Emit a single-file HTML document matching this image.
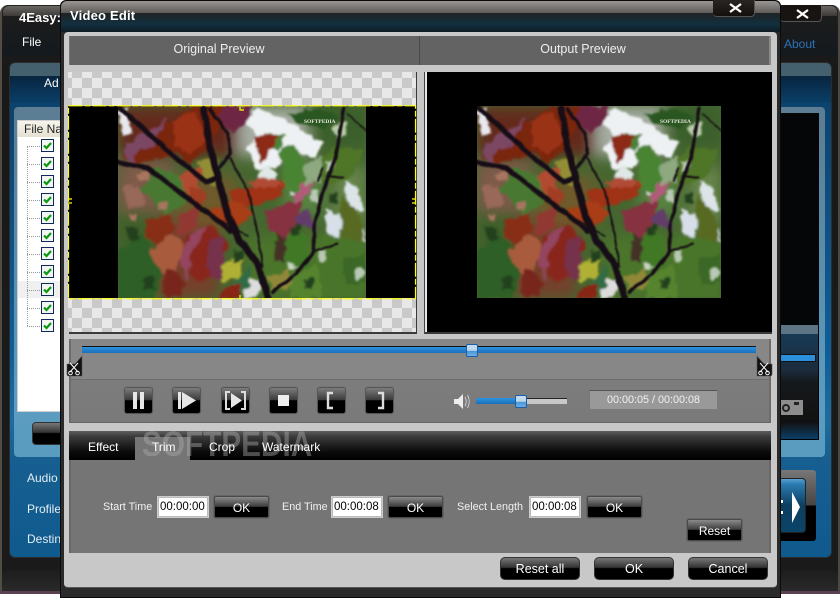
<!DOCTYPE html>
<html><head><meta charset="utf-8"><style>
html,body{margin:0;padding:0;background:#fff}
#r{position:relative;width:840px;height:598px;overflow:hidden;font-family:"Liberation Sans",sans-serif;font-size:12px;color:#fff}
#r div{position:absolute;box-sizing:border-box}
.t{white-space:nowrap;line-height:14px}
.b{background:linear-gradient(#8a8a8a 0,#3c3c3c 48%,#000 50%,#000 100%);border:1px solid #4a4a4a;border-radius:2px;text-align:center;color:#fff;font-size:12px;line-height:22px;box-shadow:0 0 0 1px #666}
.p{background:linear-gradient(#7c7c7c 0,#3a3a3a 48%,#000 50%,#000 100%);border:1px solid #555;border-radius:3px;width:29px;height:27px;top:387px;box-shadow:0 0 0 1px #777}
.p svg{position:absolute;left:0;top:0}
.bb{background:linear-gradient(#777 0,#333 45%,#000 50%,#000 100%);border:1px solid #333;border-radius:5px;height:23px;top:557px;width:80px;text-align:center;line-height:22px;font-size:12.5px}
.in{background:#fff;border:1px solid #ccc;outline:1px solid #bbb;outline-offset:-2px;color:#000;width:52px;height:22px;top:496px;font-size:11.5px;line-height:20px;padding-left:2px}
.lb{top:500px;color:#f0f0f0;font-size:10.8px}
.ck{left:41px;width:13px;height:13px;border:1px solid #0c2a5c;background:#f4f4f0}
.dot{left:27px;width:13px;height:0;border-top:1px dotted #999}
.chk{background-color:#c9c9c9;background-image:conic-gradient(#e8e8e8 25%,#c9c9c9 0 50%,#e8e8e8 0 75%,#c9c9c9 0);background-size:20px 20px}
</style></head><body><div id="r">

<!-- main window behind -->
<div style="left:0;top:0;width:840px;height:598px;background:#fff"></div>
<div style="left:0;top:5px;width:840px;height:588px;border-radius:8px 8px 0 0;background:linear-gradient(#222 0,#191919 60px,#1a1a1a 100%);border-left:2px solid #514c44;border-right:2px solid #4c4843"></div>
<div style="left:3px;top:6px;width:834px;height:10px;background:linear-gradient(#6b6864,#3c3a38);border-radius:6px 6px 0 0"></div>
<div style="left:3px;top:16px;width:834px;height:40px;background:linear-gradient(#1c1c1c,#141a1e)"></div>
<div style="left:2px;top:570px;width:836px;height:23px;background:linear-gradient(#1d1d1d,#2a2a2a)"></div>
<div style="left:0;top:591px;width:60px;height:3px;background:#5a3f50"></div>
<div style="left:780px;top:591px;width:60px;height:3px;background:#5a3f50"></div>
<div class="t" style="left:19px;top:11px;font-weight:bold;font-size:13px">4Easy:</div>
<div class="t" style="left:22px;top:35px;font-size:12px">File</div>
<div class="t" style="left:784px;top:37px;color:#2d73b8;font-size:12px">About</div>
<div style="left:780px;top:5px;width:42px;height:17px;background:#181412;border-radius:0 0 4px 4px;border-bottom:1px solid #555;border-right:1px solid #555"></div>
<svg style="position:absolute;left:795px;top:8px" width="16" height="12"><path d="M2 2L13 10M13 2L2 10" stroke="#fff" stroke-width="2.2" fill="none"/></svg>

<!-- main blue panel -->
<div style="left:9px;top:62px;width:823px;height:496px;border-radius:6px;border:1px solid #2c2c2c;background:linear-gradient(#0c3f68 0,#0f5f9b 60%,#1e6c9e 72%,#175f91 80%,#0f5a8e 100%)"></div>
<div style="left:10px;top:63px;width:821px;height:13px;background:#44606f;border-radius:5px 5px 0 0"></div>
<div style="left:10px;top:76px;width:821px;height:27px;background:linear-gradient(#08253f,#0a3f68)"></div>
<div class="t" style="left:44px;top:76px;font-size:12px">Ad</div>
<div style="left:14px;top:107px;width:811px;height:350px;border-radius:4px;background:linear-gradient(#5c7d93,#5b9cc0 85%,#5a9cc0)"></div>
<div style="left:17px;top:120px;width:45px;height:292px;background:#fff;border:1px solid #d0d0d0"></div>
<div style="left:18px;top:121px;width:44px;height:16px;background:linear-gradient(#f6f4ec,#e4e0d2)"></div>
<div class="t" style="left:24px;top:122px;color:#222;font-size:12px">File Name</div>
<div style="left:18px;top:281px;width:42px;height:17px;background:#f0f0f0"></div>
<div style="left:27px;top:146px;width:0;height:180px;border-left:1px dotted #999"></div>

<div class="dot" style="top:146px"></div><div class="ck" style="top:139px"></div>
<div class="dot" style="top:164px"></div><div class="ck" style="top:157px"></div>
<div class="dot" style="top:182px"></div><div class="ck" style="top:175px"></div>
<div class="dot" style="top:200px"></div><div class="ck" style="top:193px"></div>
<div class="dot" style="top:218px"></div><div class="ck" style="top:211px"></div>
<div class="dot" style="top:236px"></div><div class="ck" style="top:229px"></div>
<div class="dot" style="top:254px"></div><div class="ck" style="top:247px"></div>
<div class="dot" style="top:272px"></div><div class="ck" style="top:265px"></div>
<div class="dot" style="top:290px"></div><div class="ck" style="top:283px"></div>
<div class="dot" style="top:308px"></div><div class="ck" style="top:301px"></div>
<div class="dot" style="top:326px"></div><div class="ck" style="top:319px"></div>
<svg style="position:absolute;left:41px;top:139px" width="13" height="200" fill="none" stroke="#0a9a12" stroke-width="2.2">
<path d="M3 6.5L5.5 9L10 4"/><path d="M3 24.5L5.5 27L10 22"/><path d="M3 42.5L5.5 45L10 40"/><path d="M3 60.5L5.5 63L10 58"/><path d="M3 78.5L5.5 81L10 76"/><path d="M3 96.5L5.5 99L10 94"/><path d="M3 114.5L5.5 117L10 112"/><path d="M3 132.5L5.5 135L10 130"/><path d="M3 150.5L5.5 153L10 148"/><path d="M3 168.5L5.5 171L10 166"/><path d="M3 186.5L5.5 189L10 184"/></svg>

<div style="left:32px;top:422px;width:40px;height:23px;border-radius:4px;background:linear-gradient(#777,#333 45%,#000 50%);border:1px solid #333"></div>
<div class="t" style="left:27px;top:471px;font-size:12px;color:#e4eef4">Audio</div>
<div class="t" style="left:27px;top:502px;font-size:12px;color:#e4eef4">Profile</div>
<div class="t" style="left:27px;top:532px;font-size:12px;color:#e4eef4">Destin</div>

<!-- right bits of main -->
<div style="left:780px;top:113px;width:39px;height:212px;background:#040608"></div>
<div style="left:780px;top:325px;width:39px;height:115px;background:linear-gradient(#5c7484 0,#5c7484 9px,#183a56 9px,#1b2c3c 45px,#15191c 50%,#111 85%,#0c3f66 100%);border-right:1px solid #000;border-bottom:1px solid #000"></div>
<div style="left:780px;top:354px;width:36px;height:8px;background:#2b8fdb;border:1px solid #111;border-width:1px 1px 1px 0"></div>
<div style="left:780px;top:400px;width:23px;height:15px;background:#8d8d8d"></div>
<div style="left:782px;top:404px;width:8px;height:8px;border:2px solid #222;border-radius:50%"></div>
<div style="left:794px;top:402px;width:5px;height:3px;background:#222"></div>
<div style="left:780px;top:470px;width:36px;height:71px;background:linear-gradient(#777,#444 50%,#000 50%);border-radius:0 3px 3px 0"></div>
<div style="left:780px;top:478px;width:26px;height:55px;background:linear-gradient(#5aa0d0 0,#2a7ab0 10%,#0c3e60 50%,#0a4468 100%);border-radius:0 4px 4px 0;border:1px solid #222;border-left:0"></div>
<svg style="position:absolute;left:780px;top:490px" width="24" height="34"><path d="M12 2L20 17L12 33Z" fill="#fff"/><rect x="1" y="10" width="2" height="3" fill="#fff"/><rect x="1" y="21" width="2" height="3" fill="#fff"/></svg>

<!-- dialog -->
<div style="left:60px;top:0;width:721px;height:598px;background:#2a2a2a;border:1px solid #0a0a0a;border-radius:6px 6px 0 0"></div>
<div style="left:61px;top:1px;width:719px;height:12px;background:linear-gradient(#9a9793,#5d5b58);border-radius:6px 6px 0 0"></div>
<div style="left:61px;top:13px;width:719px;height:19px;background:linear-gradient(#1f2224,#12303f 60%,#0f1c24)"></div>
<div class="t" style="left:70px;top:9px;font-weight:bold;font-size:13px;letter-spacing:.2px">Video Edit</div>
<div style="left:713px;top:0;width:42px;height:17px;background:linear-gradient(#2a2522,#14100e);border-radius:0 0 4px 4px;border-bottom:1px solid #555;border-right:1px solid #555"></div>
<svg style="position:absolute;left:728px;top:2px" width="16" height="12"><path d="M2 2L13 10M13 2L2 10" stroke="#fff" stroke-width="2.2" fill="none"/></svg>

<div style="left:64px;top:32px;width:713px;height:556px;background:#c8c8c8;border-radius:4px;border-bottom:1px solid #555"></div>
<div style="left:69px;top:36px;width:702px;height:29px;background:#636363;border-left:1px solid #777;border-right:2px solid #8a8a8a"></div>
<div style="left:419px;top:36px;width:1px;height:29px;background:#4a4a4a"></div>
<div class="t" style="left:69px;top:42px;width:300px;text-align:center;font-size:12.5px;color:#eee">Original Preview</div>
<div class="t" style="left:420px;top:42px;width:326px;text-align:center;font-size:12.5px;color:#eee">Output Preview</div>

<!-- checker -->
<div class="chk" style="left:68px;top:72px;width:348px;height:34px;background-position:4px 16px"></div>
<div class="chk" style="left:68px;top:298px;width:348px;height:34px;background-position:4px 0"></div>
<div style="left:69px;top:332px;width:348px;height:2px;background:#3a3a3a"></div>
<div style="left:416px;top:72px;width:1px;height:262px;background:#3a3a3a"></div>
<div style="left:68px;top:106px;width:348px;height:192px;background:#000"></div>
<div style="left:424px;top:72px;width:3px;height:262px;background:#e8e8e8;border-left:1px solid #444"></div>
<div style="left:427px;top:72px;width:345px;height:260px;background:#000"></div>
<div style="left:425px;top:332px;width:347px;height:2px;background:#3a3a3a"></div>

<svg width="0" height="0" style="position:absolute"><defs>
<filter id="org" x="-5%" y="-5%" width="110%" height="110%"><feTurbulence type="fractalNoise" baseFrequency="0.11" numOctaves="3" seed="4" result="n"/><feDisplacementMap in="SourceGraphic" in2="n" scale="9" xChannelSelector="R" yChannelSelector="G"/><feGaussianBlur stdDeviation="1"/></filter>
<filter id="brn" x="-5%" y="-5%" width="110%" height="110%"><feTurbulence type="fractalNoise" baseFrequency="0.08" numOctaves="2" seed="7" result="n"/><feDisplacementMap in="SourceGraphic" in2="n" scale="3" xChannelSelector="R" yChannelSelector="G"/><feGaussianBlur stdDeviation="0.7"/></filter>
<filter id="bb" x="-10%" y="-10%" width="120%" height="120%"><feGaussianBlur stdDeviation="7"/></filter>
<clipPath id="cp"><rect width="248" height="192"/></clipPath>
<g id="photo" clip-path="url(#cp)">
<rect width="248" height="192" fill="#466630"/>
<g filter="url(#bb)">
<rect x="0" y="55" width="55" height="50" fill="#7e5a48"/>
<rect x="0" y="105" width="40" height="87" fill="#3f5f2a"/>
<rect x="40" y="110" width="60" height="82" fill="#74412c"/>
<rect x="60" y="70" width="60" height="50" fill="#6e5a2a"/>
<rect x="120" y="0" width="70" height="50" fill="#a4aca0"/>
<rect x="165" y="60" width="40" height="50" fill="#56823f"/>
<rect x="200" y="0" width="48" height="40" fill="#3a5e2c"/>
<rect x="130" y="130" width="118" height="62" fill="#4c742a"/>
<rect x="215" y="60" width="33" height="60" fill="#66844c"/>
<rect x="0" y="0" width="120" height="50" fill="#642a1c"/>
</g>
<g filter="url(#org)">
<!-- sky -->
<path d="M126 14L140 4L158 10L178 20L206 38L196 52L172 44L158 62L138 62L130 44L138 28Z" fill="#eef1f3"/>
<path d="M145 60L160 66L152 80L138 76Z" fill="#dfe8e6"/>
<path d="M176 72L186 78L182 92L172 88Z" fill="#dfe6e8"/>
<path d="M225 75L240 82L246 104L232 104Z" fill="#dce4e8"/>
<path d="M208 104L222 110L222 132L208 126Z" fill="#d8dfe8"/>
<path d="M238 120L248 126L246 146L238 138Z" fill="#d6dee6"/>
<path d="M0 6L8 2L14 26L4 32Z" fill="#e8e8ee"/>
<path d="M124 176L144 172L142 190L126 192Z" fill="#dcdcdc"/>
<path d="M168 152L180 148L182 160L170 165Z" fill="#c8d6c0"/>
<path d="M215 20L228 16L230 30L218 34Z" fill="#b8cca8"/>
<!-- greens -->
<path d="M162 42L176 38L190 62L182 96L166 78Z" fill="#4a8431"/>
<path d="M190 62L218 40L246 44L234 72L206 80Z" fill="#507428"/>
<path d="M222 88L244 112L247 150L224 132Z" fill="#586a20"/>
<path d="M170 8L200 2L222 12L205 22L180 18Z" fill="#2a5624"/>
<path d="M152 112L186 128L192 165L160 152Z" fill="#417828"/>
<path d="M205 128L248 136L245 190L200 190Z" fill="#487429"/>
<path d="M0 145L26 128L44 160L36 192L0 192Z" fill="#2f5e25"/>
<path d="M34 60L62 70L70 96L48 110L24 84Z" fill="#4a7830"/>
<path d="M150 28L168 30L160 44L150 40Z" fill="#488438"/>
<path d="M224 150L248 150L248 175L228 178Z" fill="#3b6828"/>
<path d="M170 170L200 160L205 192L172 192Z" fill="#56842e"/>
<path d="M80 55L100 50L100 80L85 75Z" fill="#928e34"/>
<path d="M106 158L126 150L122 172L102 176Z" fill="#b0b036"/>
<path d="M118 175L134 158L130 184L112 190Z" fill="#2e6c44"/>
<path d="M150 172L170 162L175 178L155 186Z" fill="#908838"/>
<!-- reds -->
<path d="M4 50L30 22L58 14L75 0L108 0L106 14L92 40L72 58L58 46L35 54L15 58Z" fill="#7a2610"/>
<path d="M55 15L75 5L90 30L72 50L58 40Z" fill="#9a3214"/>
<path d="M5 40L38 20L50 10L36 40L20 46L13 60Z" fill="#7c4662"/>
<path d="M106 0L135 0L128 18L115 28L100 12Z" fill="#6e2644"/>
<path d="M60 70L85 60L80 85L70 90Z" fill="#b04c30"/>
<path d="M136 28L160 30L150 48L142 60Z" fill="#8c2a14"/>
<path d="M70 80L90 88L78 105Z" fill="#a03c22"/>
<path d="M112 86L166 76L164 90L120 104Z" fill="#a03212"/>
<path d="M130 76L150 70L165 80L138 82Z" fill="#b04c36"/>
<path d="M172 90L194 70L198 80L178 98Z" fill="#b05c78"/>
<path d="M88 106L115 94L136 106L115 124Z" fill="#a83c16"/>
<path d="M146 106L184 94L180 118L164 136L150 120Z" fill="#863240"/>
<path d="M176 112L190 102L199 124L180 120Z" fill="#623e6a"/>
<path d="M62 108L82 100L78 120L60 130Z" fill="#923832"/>
<path d="M28 112L50 108L58 124L40 138L28 134Z" fill="#882e16"/>
<path d="M66 132L92 120L110 136L100 168L78 176L70 158Z" fill="#88281a"/>
<path d="M92 132L106 130L106 164L99 176L88 160Z" fill="#76304c"/>
<path d="M76 126L90 122L72 150L70 176L60 150Z" fill="#94445e"/>
<path d="M30 146L54 128L66 138L56 168L40 164Z" fill="#a85c3c"/>
<path d="M4 80L24 82L28 98L10 102Z" fill="#986858"/>
<path d="M50 160L68 178L62 192L44 188Z" fill="#78281a"/>
<path d="M110 180L124 178L120 192L100 192Z" fill="#882816"/>
<path d="M158 128L168 130L165 156L158 152Z" fill="#443028"/>
<!-- pale leaf -->
<path d="M184 58L206 50L202 76L188 80Z" fill="#8ea880"/>
</g>
<!-- speckle -->
<g filter="url(#org)" fill="#b8c8b4">
<path d="M208 56L216 54L216 64L209 66Z"/><path d="M192 86L200 84L201 95L193 96Z"/><path d="M200 146L208 144L208 154L201 156Z"/><path d="M236 164L245 162L245 172L238 174Z"/>
<g fill="#22401c"><path d="M172 120L182 118L181 130L173 130Z"/><path d="M210 88L219 87L219 97L211 97Z"/><path d="M9 122L20 121L20 134L10 134Z"/><path d="M25 172L36 171L36 184L26 184Z"/><path d="M185 173L195 172L195 183L186 183Z"/><path d="M115 145L125 144L125 155L116 155Z"/></g>
<g fill="#a87460"><path d="M10 108L18 107L18 116L11 116Z"/><path d="M40 96L48 95L48 104L41 104Z"/><path d="M20 66L29 65L29 74L21 74Z"/></g>
</g>
<g fill="none" stroke="#120e12" stroke-linecap="round" stroke-linejoin="round" filter="url(#brn)">
<path d="M86 3L92 40L100 72L110 110L122 135L140 158L150 192" stroke-width="7"/>
<path d="M0 0L28 25L58 52L88 76L98 72" stroke-width="5"/>
<path d="M0 56L30 62L60 85L90 107L112 125" stroke-width="5"/>
<path d="M92 3L110 28L112 48L102 62" stroke-width="3"/>
<path d="M112 52L130 85L138 120L145 160" stroke-width="2"/>
<path d="M226 2L218 50L205 85L196 120L196 145L178 168L155 186" stroke-width="3.4"/>
<path d="M210 70L225 72M205 62L200 75M198 145L220 138" stroke-width="2"/>
<path d="M230 8L248 25" stroke-width="1.5"/>
<path d="M95 110L130 130" stroke-width="1.5"/>
</g>
</g>
</defs></svg>

<svg style="position:absolute;left:118px;top:106px" width="248" height="192" viewBox="0 0 248 192" preserveAspectRatio="none"><use href="#photo"/><text x="186" y="17" font-family="Liberation Serif,serif" font-size="5.5" font-weight="bold" fill="#e8e8d8">SOFTPEDIA</text></svg>
<svg style="position:absolute;left:477px;top:106px" width="244" height="192" viewBox="0 0 248 192" preserveAspectRatio="none"><use href="#photo"/><text x="186" y="17" font-family="Liberation Serif,serif" font-size="5.5" font-weight="bold" fill="#e8e8d8">SOFTPEDIA</text></svg>

<!-- yellow dashed crop -->
<svg style="position:absolute;left:68px;top:105px" width="350" height="195" fill="none" stroke="#ff0" stroke-width="1.2">
<rect x="0.5" y="0.8" width="347" height="193" stroke-dasharray="14 2 6 2"/>
<path d="M0 94H4M0 98H4M344 94H348M344 98H348M172 2V5H176M172 190V193"/></svg>

<!-- slider panel -->
<div style="left:69px;top:339px;width:702px;height:84px;background:linear-gradient(#878787,#878787 40px,#5e5e5e 40px,#7c7c7c 41px,#7a7a7a 100%);border-left:2px solid #6e6b68;border-right:2px solid #6e6b68;border-bottom:1px solid #666"></div>
<div style="left:82px;top:346px;width:674px;height:7px;background:linear-gradient(#111 0,#111 1px,#2e93e0 1px,#1a70b8 100%)"></div>
<div style="left:466px;top:344px;width:12px;height:13px;border:1px solid #1a5fa5;border-radius:2px;background:linear-gradient(#c6dcef,#bcd4ea 50%,#4a96d8 55%,#6caee6)"></div>

<svg style="position:absolute;left:66px;top:355px" width="18" height="22"><path d="M1 9L9 9L16 1V21H3Q1 21 1 19Z" fill="#111" stroke="#555" stroke-width=".6"/><g fill="none" stroke="#fff" stroke-width="1"><path d="M4 8L12 17M12 8L4 17"/><circle cx="4.5" cy="18" r="1.8"/><circle cx="11.5" cy="18" r="1.8"/></g></svg>
<svg style="position:absolute;left:755px;top:355px" width="18" height="22"><path d="M17 9L9 9L2 1V21H15Q17 21 17 19Z" fill="#111" stroke="#555" stroke-width=".6"/><g fill="none" stroke="#fff" stroke-width="1"><path d="M5 8L13 17M13 8L5 17"/><circle cx="5.5" cy="18" r="1.8"/><circle cx="12.5" cy="18" r="1.8"/></g></svg>

<div class="p" style="left:124px"><svg width="27" height="25" fill="#e6e6e6"><rect x="8" y="4" width="4" height="17"/><rect x="15" y="4" width="4" height="17"/></svg></div>
<div class="p" style="left:172px"><svg width="27" height="25" fill="#e6e6e6"><rect x="5" y="4" width="3" height="17"/><path d="M9 4L23 12.5L9 21Z"/></svg></div>
<div class="p" style="left:221px"><svg width="27" height="25" fill="none"><path d="M8 4H4V21H8M19 4H23V21H19" stroke="#ddd" stroke-width="2"/><path d="M9 5L20 12.5L9 20Z" fill="#e6e6e6"/></svg></div>
<div class="p" style="left:269px"><svg width="27" height="25"><rect x="8" y="7" width="11" height="11" fill="#eee"/></svg></div>
<div class="p" style="left:317px"><svg width="27" height="25" fill="none"><path d="M15 5H10V20H15" stroke="#ddd" stroke-width="2.4"/></svg></div>
<div class="p" style="left:365px"><svg width="27" height="25" fill="none"><path d="M12 5H17V20H12" stroke="#ddd" stroke-width="2.4"/></svg></div>

<svg style="position:absolute;left:453px;top:393px" width="18" height="17"><path d="M1 6H5L10 1V16L5 11H1Z" fill="#eee"/><path d="M12 4Q14.500 8.500 12 13M14.500 2Q18 8.500 14.500 15" fill="none" stroke="#ddd" stroke-width=".8"/></svg>
<div style="left:476px;top:398px;width:91px;height:6px;background:linear-gradient(#222 0,#222 1px,#c8c8c8 1px)"></div>
<div style="left:476px;top:398px;width:42px;height:6px;background:linear-gradient(#2e93e0,#1a70b8)"></div>
<div style="left:515px;top:395px;width:12px;height:13px;border:1px solid #1a5fa5;border-radius:2px;background:linear-gradient(#c6dcef,#bcd4ea 50%,#4a96d8 55%,#6caee6)"></div>
<div style="left:589px;top:390px;width:128px;height:19px;background:#999;border-top:1px solid #555;border-left:1px solid #777;text-align:center;line-height:19px;font-size:10.8px;color:#f2f2f2">00:00:05 / 00:00:08</div>

<!-- tabs -->
<div style="left:69px;top:431px;width:702px;height:122px;background:#757575;border-left:2px solid #6a6764;border-right:2px solid #6a6764"></div>
<div style="left:69px;top:431px;width:702px;height:29px;background:linear-gradient(#5e5e5e 0,#3a3a3a 20%,#0c0c0c 70%,#000)"></div>
<div style="left:135px;top:437px;width:55px;height:23px;background:#757575"></div>
<div class="t" style="left:142px;top:425px;font-weight:bold;font-size:35px;line-height:40px;color:#b0b0b0;opacity:.42;transform-origin:0 0;transform:scaleX(.85)">SOFTPEDIA</div>
<div class="t" style="left:88px;top:440px;font-size:12px">Effect</div>
<div class="t" style="left:152px;top:440px;font-size:12px">Trim</div>
<div class="t" style="left:209px;top:440px;font-size:12px">Crop</div>
<div class="t" style="left:262px;top:440px;font-size:12px">Watermark</div>

<div class="t lb" style="left:103px">Start Time</div>
<div class="in" style="left:157px">00:00:00</div>
<div class="b" style="left:214px;top:496px;width:55px;height:22px">OK</div>
<div class="t lb" style="left:282px">End Time</div>
<div class="in" style="left:331px">00:00:08</div>
<div class="b" style="left:388px;top:496px;width:55px;height:22px">OK</div>
<div class="t lb" style="left:457px">Select Length</div>
<div class="in" style="left:529px">00:00:08</div>
<div class="b" style="left:587px;top:496px;width:55px;height:22px">OK</div>
<div class="b" style="left:687px;top:519px;width:55px;height:22px">Reset</div>

<div class="bb" style="left:500px">Reset all</div>
<div class="bb" style="left:594px">OK</div>
<div class="bb" style="left:688px">Cancel</div>
</div></body></html>
